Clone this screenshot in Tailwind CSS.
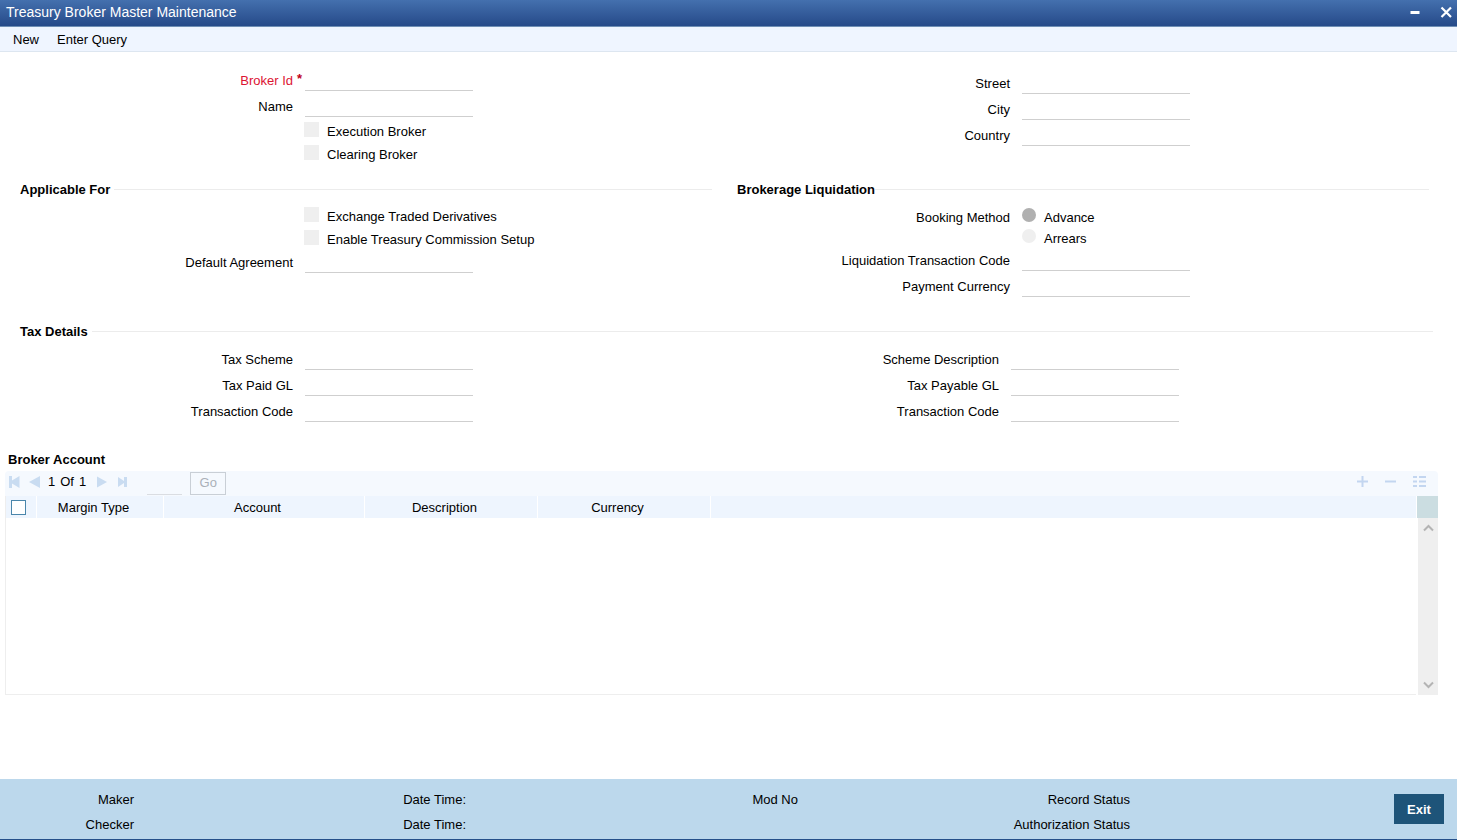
<!DOCTYPE html>
<html lang="en">
<head>
    <meta charset="UTF-8">
    <meta name="viewport" content="width=device-width, initial-scale=1.0">
    <title>Treasury Broker Master Maintenance</title>
    <script src="https://cdn.jsdelivr.net/npm/@tailwindcss/browser@4"></script>
</head>
<body class="bg-white text-black text-[13px] leading-[21px] font-['Liberation_Sans',Arial,sans-serif]">
    <div class="min-h-screen flex flex-col">
        <!-- Title bar -->
        <header class="h-[27px] pl-[6px] pr-[5px] pb-[2px] flex items-center justify-between bg-linear-to-b from-[#4470ae] to-[#264a89] border-b border-[#6f8fb5] text-white">
            <h1 class="text-sm">Treasury Broker Master Maintenance</h1>
            <div class="flex items-center gap-5">
                <button type="button" aria-label="Minimize">
                    <svg class="w-[10px] h-3" viewBox="0 0 10 12"><path d="M0.5 5h9v3h-9z" fill="#fff"/></svg>
                </button>
                <button type="button" aria-label="Close">
                    <svg class="w-3 h-3" viewBox="0 0 12 12"><path d="M1.500 1.500l9.500 9.500M11 1.500l-9.500 9.500" stroke="#fff" stroke-width="2.2" fill="none"/></svg>
                </button>
            </div>
        </header>

        <!-- Actions -->
        <nav class="h-[25px] px-[13px] pt-px flex items-center gap-[18px] bg-[#eff5ff] border-b border-[#dde6f0]">
            <button type="button">New</button>
            <button type="button">Enter Query</button>
        </nav>

        <main class="flex-1">
            <!-- Broker -->
            <div class="pl-5 pr-7 grid grid-cols-2 gap-x-[25px] min-h-[127px]">
                <div class="pt-[17px]">
                    <div class="space-y-1">
                        <div class="flex items-end gap-3">
                            <label for="brokerId" class="relative w-[273px] text-right text-[#dc1432]">Broker Id<span class="absolute left-full top-0 ml-1 -mt-[2px] text-[#c00018] font-bold">*</span></label>
                            <input type="text" id="brokerId" class="w-[168px] h-[22px] border-b border-[#cfcfcf] outline-none" disabled>
                        </div>
                        <div class="flex items-end gap-3">
                            <label for="name" class="w-[273px] text-right">Name</label>
                            <input type="text" id="name" class="w-[168px] h-[22px] border-b border-[#cfcfcf] outline-none" disabled>
                        </div>
                    </div>
                    <div class="mt-[3px] pl-[284px]">
                        <label class="flex h-[23px] items-center gap-2">
                            <input type="checkbox" class="appearance-none size-[15px] mb-1 bg-[#efefef]" disabled>
                            Execution Broker
                        </label>
                        <label class="flex h-[23px] items-center gap-2">
                            <input type="checkbox" class="appearance-none size-[15px] mb-1 bg-[#efefef]" disabled>
                            Clearing Broker
                        </label>
                    </div>
                </div>
                <div class="pt-5 space-y-1">
                    <div class="flex items-end gap-3">
                        <label for="street" class="w-[273px] text-right">Street</label>
                        <input type="text" id="street" class="w-[168px] h-[22px] border-b border-[#cfcfcf] outline-none" disabled>
                    </div>
                    <div class="flex items-end gap-3">
                        <label for="city" class="w-[273px] text-right">City</label>
                        <input type="text" id="city" class="w-[168px] h-[22px] border-b border-[#cfcfcf] outline-none" disabled>
                    </div>
                    <div class="flex items-end gap-3">
                        <label for="country" class="w-[273px] text-right">Country</label>
                        <input type="text" id="country" class="w-[168px] h-[22px] border-b border-[#cfcfcf] outline-none" disabled>
                    </div>
                </div>
            </div>

            <!-- Applicable For / Brokerage Liquidation -->
            <div class="pl-5 pr-7 grid grid-cols-2 gap-x-[25px] min-h-[142px]">
                <fieldset class="min-w-0">
                    <legend class="w-full font-bold"><span class="flex items-center after:flex-1 after:ml-1 after:border-t after:border-[#ececec]">Applicable For</span></legend>
                    <div class="mt-[5px] pl-[284px]">
                        <label class="flex h-[23px] items-center gap-2">
                            <input type="checkbox" class="appearance-none size-[15px] mb-1 bg-[#efefef]" disabled>
                            Exchange Traded Derivatives
                        </label>
                        <label class="flex h-[23px] items-center gap-2">
                            <input type="checkbox" class="appearance-none size-[15px] mb-1 bg-[#efefef]" disabled>
                            Enable Treasury Commission Setup
                        </label>
                    </div>
                    <div class="flex items-end gap-3">
                        <label for="agreement" class="w-[273px] text-right">Default Agreement</label>
                        <input type="text" id="agreement" class="w-[168px] h-[22px] border-b border-[#cfcfcf] outline-none" disabled>
                    </div>
                </fieldset>
                <fieldset class="min-w-0">
                    <legend class="w-full font-bold"><span class="flex items-center after:flex-1 after:border-t after:border-[#ececec]">Brokerage Liquidation</span></legend>
                    <div class="mt-[7px] flex gap-3" role="radiogroup" aria-labelledby="booking">
                        <span id="booking" class="w-[273px] h-[21px] text-right">Booking Method</span>
                        <div>
                            <label class="flex h-[21px] items-center gap-2">
                                <input type="radio" name="booking" class="appearance-none size-[14px] mb-[6px] rounded-full bg-[#efefef] checked:bg-[#b0b0b0]" checked disabled>
                                Advance
                            </label>
                            <label class="flex h-[21px] items-center gap-2">
                                <input type="radio" name="booking" class="appearance-none size-[14px] mb-[6px] rounded-full bg-[#efefef] checked:bg-[#b0b0b0]" disabled>
                                Arrears
                            </label>
                        </div>
                    </div>
                    <div class="space-y-1">
                        <div class="flex items-end gap-3">
                            <label for="liquidation" class="w-[273px] text-right">Liquidation Transaction Code</label>
                            <input type="text" id="liquidation" class="w-[168px] h-[22px] border-b border-[#cfcfcf] outline-none" disabled>
                        </div>
                        <div class="flex items-end gap-3">
                            <label for="currency" class="w-[273px] text-right">Payment Currency</label>
                            <input type="text" id="currency" class="w-[168px] h-[22px] border-b border-[#cfcfcf] outline-none" disabled>
                        </div>
                    </div>
                </fieldset>
            </div>

            <!-- Tax Details -->
            <fieldset class="min-w-0 pl-5 pr-6 min-h-[128px]">
                <legend class="w-full font-bold"><span class="flex items-center after:flex-1 after:ml-1 after:border-t after:border-[#ececec]">Tax Details</span></legend>
                <div class="mt-[6px] pr-px grid grid-cols-2 gap-y-1">
                    <div class="flex items-end gap-3">
                        <label for="taxScheme" class="w-[273px] text-right">Tax Scheme</label>
                        <input type="text" id="taxScheme" class="w-[168px] h-[22px] border-b border-[#cfcfcf] outline-none" disabled>
                    </div>
                    <div class="flex items-end gap-3">
                        <label for="schemeDesc" class="w-[273px] text-right">Scheme Description</label>
                        <input type="text" id="schemeDesc" class="w-[168px] h-[22px] border-b border-[#cfcfcf] outline-none" disabled>
                    </div>
                    <div class="flex items-end gap-3">
                        <label for="taxPaid" class="w-[273px] text-right">Tax Paid GL</label>
                        <input type="text" id="taxPaid" class="w-[168px] h-[22px] border-b border-[#cfcfcf] outline-none" disabled>
                    </div>
                    <div class="flex items-end gap-3">
                        <label for="taxPayable" class="w-[273px] text-right">Tax Payable GL</label>
                        <input type="text" id="taxPayable" class="w-[168px] h-[22px] border-b border-[#cfcfcf] outline-none" disabled>
                    </div>
                    <div class="flex items-end gap-3">
                        <label for="paidCode" class="w-[273px] text-right">Transaction Code</label>
                        <input type="text" id="paidCode" class="w-[168px] h-[22px] border-b border-[#cfcfcf] outline-none" disabled>
                    </div>
                    <div class="flex items-end gap-3">
                        <label for="payableCode" class="w-[273px] text-right">Transaction Code</label>
                        <input type="text" id="payableCode" class="w-[168px] h-[22px] border-b border-[#cfcfcf] outline-none" disabled>
                    </div>
                </div>
            </fieldset>

            <!-- Broker Account -->
            <section class="pl-[5px] pr-[19px] pb-5">
                <h2 class="pl-[3px] mb-px font-bold">Broker Account</h2>
                <div class="h-[25px] pl-1 pr-3 flex items-center justify-between rounded-t-sm bg-[#f5f9fe]">
                    <div class="flex items-center text-[#c9dcf1]">
                        <button type="button" aria-label="First" disabled>
                            <svg class="w-[11px] h-3 mb-1" viewBox="0 0 11 12" fill="currentColor"><path d="M0 0h3v4.500L10.500 0v12L3 7.500V12H0z"/></svg>
                        </button>
                        <button type="button" class="ml-[9px]" aria-label="Previous" disabled>
                            <svg class="w-[11px] h-3 mb-1" viewBox="0 0 11 12" fill="currentColor"><path d="M11 0v12L0 6z"/></svg>
                        </button>
                        <span class="ml-2 mb-1 flex gap-[5px] text-black"><span>1</span><span>Of</span><span>1</span></span>
                        <button type="button" class="ml-[11px]" aria-label="Next" disabled>
                            <svg class="w-[10px] h-3 mb-1" viewBox="0 0 10 12" fill="currentColor"><path d="M0 .5v11L10 6z"/></svg>
                        </button>
                        <button type="button" class="ml-[11px]" aria-label="Last" disabled>
                            <svg class="w-[9px] h-3 mb-1" viewBox="0 0 9 12" fill="currentColor"><path d="M0 1l6 4V1h3v10H6V7L0 11z"/></svg>
                        </button>
                        <input type="text" aria-label="Page" class="ml-5 w-[35px] h-[23px] border-b border-[#dadde2] outline-none" disabled>
                        <button type="button" class="ml-2 w-9 h-[23px] pb-[2px] leading-[19px] border border-[#c9cfd6] text-[#aab0b8]" disabled>Go</button>
                    </div>
                    <div class="flex items-center gap-[17px] mb-1 text-[#c3d6f0]">
                        <button type="button" aria-label="Add row" disabled>
                            <svg class="w-[11px] h-[11px]" viewBox="0 0 11 11"><path d="M5.500 0v11M0 5.500h11" stroke="currentColor" stroke-width="2"/></svg>
                        </button>
                        <button type="button" aria-label="Delete row" disabled>
                            <svg class="w-[11px] h-[11px]" viewBox="0 0 11 11"><path d="M0 5.500h11" stroke="currentColor" stroke-width="2"/></svg>
                        </button>
                        <button type="button" aria-label="Single record view" disabled>
                            <svg class="w-[13px] h-[11px]" viewBox="0 0 13 11"><path d="M0 1h4M6 1h7M0 5.500h4M6 5.500h7M0 10h4M6 10h7" stroke="currentColor" stroke-width="2"/></svg>
                        </button>
                    </div>
                </div>

                <div class="flex">
                    <div class="flex-1 min-h-[199px] border-l border-b border-[#eeeeee]">
                        <table class="w-full table-fixed">
                            <thead>
                                <tr class="h-[22px] bg-[#eef5fe]">
                                    <th class="w-[30px] border-r border-white text-left align-middle">
                                        <input type="checkbox" aria-label="Select all" class="block appearance-none ml-[5px] size-[15px] border border-[#4a86ab] bg-white">
                                    </th>
                                    <th class="w-[127px] border-r border-white pr-3 align-bottom font-normal">Margin Type</th>
                                    <th class="w-[201px] border-r border-white pr-3 align-bottom font-normal">Account</th>
                                    <th class="w-[173px] border-r border-white pr-3 align-bottom font-normal">Description</th>
                                    <th class="w-[173px] border-r border-white pr-3 align-bottom font-normal">Currency</th>
                                    <th></th>
                                </tr>
                            </thead>
                            <tbody></tbody>
                        </table>
                    </div>
                    <!-- Scroll bar -->
                    <div class="w-[21px] ml-px flex flex-col">
                        <div class="h-[22px] bg-[#cbdde1]"></div>
                        <div class="flex-1 ml-px py-[6px] flex flex-col items-center justify-between bg-[#efefef] text-[#b4b4b4]">
                            <svg class="w-[11px] h-2" viewBox="0 0 11 8"><path d="M1 6.500L5.500 2L10 6.500" fill="none" stroke="currentColor" stroke-width="2"/></svg>
                            <svg class="w-[11px] h-2" viewBox="0 0 11 8"><path d="M1 1.500L5.500 6L10 1.500" fill="none" stroke="currentColor" stroke-width="2"/></svg>
                        </div>
                    </div>
                </div>
            </section>
        </main>

        <!-- Audit -->
        <footer class="h-[61px] pr-[13px] flex items-center bg-[#bcd8ec] border-b border-[#25508a]">
            <div class="flex-1 mr-[66px] mt-[6px] grid grid-cols-4 leading-[25px]">
                <div class="w-[134px] text-right">Maker</div>
                <div class="w-[134px] text-right">Date Time:</div>
                <div class="w-[134px] text-right">Mod No</div>
                <div class="w-[134px] text-right">Record Status</div>
                <div class="w-[134px] text-right">Checker</div>
                <div class="w-[134px] text-right">Date Time:</div>
                <div></div>
                <div class="w-[134px] text-right">Authorization Status</div>
            </div>
            <button type="button" class="w-[50px] h-[30px] pt-px bg-[#1e5479] text-white font-bold">Exit</button>
        </footer>
    </div>
</body>
</html>
